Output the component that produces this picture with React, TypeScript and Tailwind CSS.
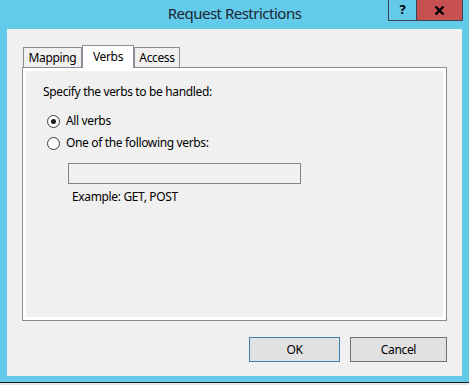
import { useState } from "react";

const font = { fontFamily: '"Segoe UI", "Noto Sans", sans-serif' };

function Radio({ checked, label, onClick }: { checked: boolean; label: string; onClick: () => void }) {
  return (
    <button onClick={onClick} className="flex items-center h-[16px] ml-[21px] text-left">
      <span className="w-[13px] h-[13px] rounded-full border border-[#3c3c3c] bg-white flex items-center justify-center">
        {checked && <span className="w-[5px] h-[5px] rounded-full bg-[#1a1a1a]" />}
      </span>
      <span className="ml-[6px] text-[12px] leading-[16px] tracking-[-0.35px] text-black">{label}</span>
    </button>
  );
}

export default function App() {
  const [allVerbs, setAllVerbs] = useState(true);
  const [tab, setTab] = useState("Verbs");

  const tabs = [
    { name: "Mapping", w: "w-[59px]" },
    { name: "Verbs", w: "w-[52px]" },
    { name: "Access", w: "w-[46px]" },
  ];

  return (
    <div style={font} className="w-[469px] h-[385px] bg-[#63caea] flex flex-col overflow-hidden select-none">
      {/* title bar */}
      <div className="h-[29px] grid grid-cols-[1fr_auto_1fr]">
        <div />
        <div className="text-[15px] leading-[29px] tracking-[-0.5px] text-[#1b2733] -mt-[1px]">Request Restrictions</div>
        <div className="flex justify-end items-start pr-[6px]">
          <div className="w-[29px] h-[21px] border border-t-0 border-[#3a4752] flex items-center justify-center text-[13px] font-bold text-black">
            ?
          </div>
          <div className="w-[46px] h-[21px] border border-t-0 border-l-0 border-[#3a4752] bg-[#c75050] flex items-center justify-center">
            <svg width="11" height="9" viewBox="0 0 11 9">
              <path d="M1.5 0.5 L9.5 8.5 M9.5 0.5 L1.5 8.5" stroke="#000" strokeWidth="2.4" />
            </svg>
          </div>
        </div>
      </div>

      {/* client */}
      <div className="mx-[7px] h-[347px] bg-[#f0f0f0] flex flex-col px-[15px] pt-[16px] tracking-[-0.35px]">
        <div className="h-[22px] flex items-end pl-[1px]">
          {tabs.map((t) =>
            t.name === tab ? (
              <button
                key={t.name}
                onClick={() => setTab(t.name)}
                className={`${t.w} h-[23px] -mb-px relative z-10 bg-white border border-b-0 border-[#898c95] text-[12px] leading-[18px] text-black text-center`}
              >
                {t.name}
              </button>
            ) : (
              <button
                key={t.name}
                onClick={() => setTab(t.name)}
                className={`${t.w} h-[20px] bg-[#f0f0f0] border border-b-0 border-[#898c95] text-[12px] leading-[20px] text-black text-center`}
              >
                {t.name}
              </button>
            ),
          )}
        </div>

        <div className="h-[254px] border border-[#898c95] bg-white p-[3px]">
          <div className="h-full bg-[#f0f0f0] flex flex-col">
            <p className="ml-[17px] mt-[13px] text-[12px] leading-[16px] text-black">
              Specify the verbs to be handled:
            </p>
            <div className="mt-[13px]">
              <Radio checked={allVerbs} label="All verbs" onClick={() => setAllVerbs(true)} />
            </div>
            <div className="mt-[6px]">
              <Radio checked={!allVerbs} label="One of the following verbs:" onClick={() => setAllVerbs(false)} />
            </div>
            <input
              disabled={allVerbs}
              className="ml-[42px] mt-[12px] w-[233px] h-[21px] border border-[#838383] bg-[#f0f0f0] outline-none text-[12px] px-1"
            />
            <p className="ml-[46px] mt-[5px] text-[12px] leading-[16px] text-black">Example: GET, POST</p>
          </div>
        </div>

        <div className="mt-[16px] flex justify-end gap-[10px]">
          <button className="w-[91px] h-[25px] bg-[#e1e1e1] border border-[#3c7fb1] text-[12px] text-black">
            OK
          </button>
          <button className="w-[97px] h-[25px] bg-[#e1e1e1] border border-[#707070] text-[12px] text-black">
            Cancel
          </button>
        </div>
      </div>

      <div className="h-[6px]" />
      <div className="h-[1px] bg-[#1a1a1a]" />
      <div className="flex-1 bg-[#dfe6ec]" />
    </div>
  );
}
